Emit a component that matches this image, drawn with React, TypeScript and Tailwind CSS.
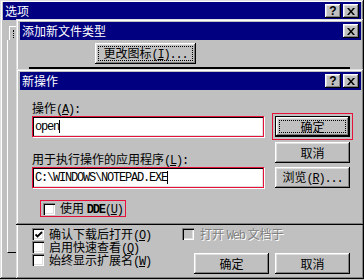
import React from "react"

const cjk = "font-['Noto_Sans_CJK_SC',sans-serif] text-[12px] leading-[12px]"
const mono = "font-['Liberation_Mono',monospace] text-[12px] tracking-[-1.2px]"
const raised =
  "shadow-[inset_-1px_-1px_0_#000,inset_1px_1px_0_#dfdfdf,inset_-2px_-2px_0_#808080,inset_2px_2px_0_#fff]"
const btnBevel =
  "shadow-[inset_-1px_-1px_0_#000,inset_1px_1px_0_#fff,inset_-2px_-2px_0_#808080,inset_2px_2px_0_#dfdfdf]"
const red = "border border-[#e8103a]"

type Kids = { children?: React.ReactNode }

function L({ children }: Kids) {
  return <span className={mono}>{children}</span>
}

// accelerator key, e.g. (A)
function Acc({ k }: { k: string }) {
  return (
    <span className={mono}>
      (<span className="underline underline-offset-[1px]">{k}</span>)
    </span>
  )
}

function TBtn({ children }: Kids) {
  return (
    <div className={`w-[16px] h-[14px] bg-[#c0c0c0] flex items-center justify-center ${btnBevel}`}>
      {children}
    </div>
  )
}

function TitleBar({ title, help }: { title: string; help?: boolean }) {
  return (
    <div className="h-[18px] shrink-0 bg-[#000080] flex items-center pl-[2px] pr-[2px]">
      <span className="text-white">{title}</span>
      <div className="ml-auto flex gap-[2px]">
        {help && (
          <TBtn>
            <span className="font-['Liberation_Sans',sans-serif] font-bold text-[12px] leading-none text-black">?</span>
          </TBtn>
        )}
        <TBtn>
          <svg width="8" height="7" viewBox="0 0 8 7">
            <path d="M0 0h2l2 2.5L6 0h2L5 3.5 8 7H6L4 4.5 2 7H0l3-3.5z" fill="#000" />
          </svg>
        </TBtn>
      </div>
    </div>
  )
}

function Btn({
  children,
  className = "w-[75px]",
  def,
  focus,
}: Kids & { className?: string; def?: boolean; focus?: string }) {
  return (
    <div
      className={`relative h-[21px] ${className} flex items-center justify-center bg-[#c0c0c0] ${
        def ? "border border-black" : ""
      } ${btnBevel}`}
    >
      {focus && <div className={`absolute ${focus} border border-dotted border-black`} />}
      <span className="relative whitespace-nowrap">{children}</span>
    </div>
  )
}

function Check({ checked, disabled }: { checked?: boolean; disabled?: boolean }) {
  return (
    <div
      className={`w-[12px] h-[12px] shrink-0 flex items-center justify-center ${
        disabled ? "bg-[#c0c0c0]" : "bg-white"
      } shadow-[inset_1px_1px_0_#808080,inset_2px_2px_0_#000,inset_-1px_-1px_0_#fff,inset_-2px_-2px_0_#dfdfdf]`}
    >
      {checked && (
        <svg width="8" height="8" viewBox="0 0 8 8" className="mt-[1px] ml-[1px]">
          <polyline points="0.5,3.5 2.5,5.5 7,1" fill="none" stroke="#000" strokeWidth="1.8" />
        </svg>
      )}
    </div>
  )
}

function CheckRow({ checked, children }: Kids & { checked?: boolean }) {
  return (
    <div className="h-[13px] flex items-start gap-[5px] whitespace-nowrap">
      <Check checked={checked} />
      <span>{children}</span>
    </div>
  )
}

function Field({ text, className = "" }: { text: string; className?: string }) {
  return (
    <div
      className={`${className} h-[21px] ${red} bg-white shadow-[inset_1px_1px_0_#000,inset_-1px_-1px_0_#dfdfdf,1px_1px_0_#fff] flex items-center pl-[2px]`}
    >
      <span className={mono}>{text}</span>
      <span className="w-px h-[13px] bg-black" />
    </div>
  )
}

export default function App() {
  return (
    <div className={`relative w-[364px] h-[280px] overflow-hidden bg-[#c0c0c0] text-black ${cjk}`}>
      {/* 选项 */}
      <div
        className={`absolute left-0 top-0 w-[364px] h-[279px] flex flex-col bg-[#c0c0c0] pl-[3px] pr-[3px] pt-[2px] ${raised}`}
      >
        <TitleBar title="选项" help />
        <div className="h-[20px] flex items-end pl-[6px]">
          <div className="w-[12px] h-[14px] border-l border-t border-white pl-[3px] pt-[3px]">
            <div className="h-[8px] border-l border-dotted border-black" />
          </div>
        </div>
        <div className="ml-[4px] h-[213px] border-l border-b border-l-white border-b-black" />
      </div>

      {/* 添加新文件类型 */}
      <div
        className={`absolute left-[16px] top-[19px] w-[348px] h-[260px] flex flex-col bg-[#c0c0c0] pl-[4px] pr-[3px] pt-[3px] ${raised}`}
      >
        <TitleBar title="添加新文件类型" />
        <div className="mt-[3px] ml-[75px]">
          <Btn className="w-[101px]" focus="inset-[3px]">
            更改图标<Acc k="I" />
            <L>...</L>
          </Btn>
        </div>
        <div className="mt-[3px] ml-[9px] w-[321px] h-[2px] bg-black" />
        <div className="flex-1" />
        <div className="flex pb-[5px]">
          <div className="ml-[12px] w-[150px] flex flex-col">
            <CheckRow checked>
              确认下载后打开<Acc k="O" />
            </CheckRow>
            <CheckRow>
              启用快速查看<Acc k="Q" />
            </CheckRow>
            <CheckRow>
              始终显示扩展名<Acc k="W" />
            </CheckRow>
          </div>
          <div className="flex flex-col">
            <div className="h-[13px] flex items-start gap-[6px] whitespace-nowrap">
              <Check disabled />
              <span className="text-[#808080] [text-shadow:1px_1px_0_#fff]">
                打开 <L>Web</L> 文档于
              </span>
            </div>
            <div className="mt-[12px] ml-[12px] flex gap-[6px]">
              <Btn>确定</Btn>
              <Btn>取消</Btn>
            </div>
          </div>
        </div>
      </div>

      {/* 新操作 */}
      <div
        className={`absolute left-[16px] top-[69px] w-[348px] h-[156px] flex flex-col bg-[#c0c0c0] pl-[4px] pr-[3px] pt-[3px] ${raised}`}
      >
        <TitleBar title="新操作" help />
        <div className="flex">
          <div className="ml-[12px] w-[232px] flex flex-col">
            <div className="mt-[12px] h-[12px] whitespace-nowrap">
              操作<Acc k="A" />
              <L>:</L>
            </div>
            <Field text="open" className="mt-[2px]" />
            <div className="mt-[16px] h-[12px] whitespace-nowrap">
              用于执行操作的应用程序<Acc k="L" />
              <L>:</L>
            </div>
            <Field text="C:\WINDOWS\NOTEPAD.EXE" className="mt-[2px]" />
            <div className={`mt-[12px] ml-[8px] w-[86px] h-[17px] ${red} flex items-center pl-[2px] gap-[5px] whitespace-nowrap`}>
              <Check />
              <span>
                使用 <span className={`${mono} font-bold`}>DDE</span>
                <Acc k="U" />
              </span>
            </div>
          </div>
          <div className="ml-[8px] flex flex-col">
            <div className={`mt-[23px] ${red} p-[2px]`}>
              <Btn def focus="inset-[3px]">
                确定
              </Btn>
            </div>
            <div className="mt-[2px] ml-[3px]">
              <Btn>取消</Btn>
            </div>
            <div className="mt-[4px] ml-[3px]">
              <Btn>
                浏览<Acc k="R" />
                <L>...</L>
              </Btn>
            </div>
          </div>
        </div>
      </div>
    </div>
  )
}
